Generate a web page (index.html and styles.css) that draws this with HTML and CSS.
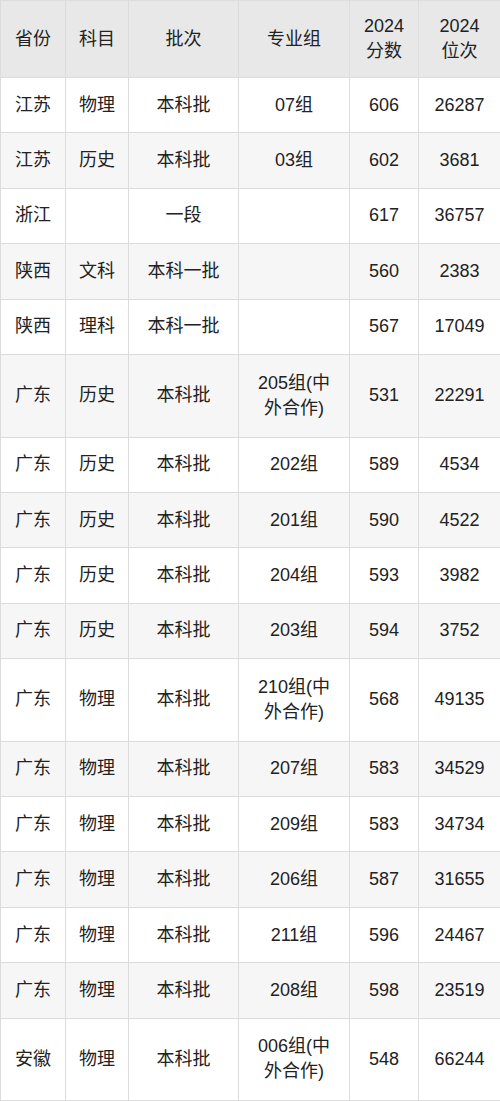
FILE: index.html
```html
<!DOCTYPE html>
<html lang="zh">
<head>
<meta charset="utf-8">
<link rel="stylesheet" href="styles.css">
</head>
<body>
<table class="tbl">
<colgroup>
<col class="c1"><col class="c2"><col class="c3"><col class="c4"><col class="c5"><col class="c6">
</colgroup>
<thead>
<tr class="head"><th>省份</th><th>科目</th><th>批次</th><th>专业组</th><th>2024<br>分数</th><th>2024<br>位次</th></tr>
</thead>
<tbody>
<tr><td>江苏</td><td>物理</td><td>本科批</td><td>07组</td><td>606</td><td>26287</td></tr>
<tr><td>江苏</td><td>历史</td><td>本科批</td><td>03组</td><td>602</td><td>3681</td></tr>
<tr><td>浙江</td><td></td><td>一段</td><td></td><td>617</td><td>36757</td></tr>
<tr><td>陕西</td><td>文科</td><td>本科一批</td><td></td><td>560</td><td>2383</td></tr>
<tr><td>陕西</td><td>理科</td><td>本科一批</td><td></td><td>567</td><td>17049</td></tr>
<tr class="tall"><td>广东</td><td>历史</td><td>本科批</td><td>205组(中外合作)</td><td>531</td><td>22291</td></tr>
<tr><td>广东</td><td>历史</td><td>本科批</td><td>202组</td><td>589</td><td>4534</td></tr>
<tr><td>广东</td><td>历史</td><td>本科批</td><td>201组</td><td>590</td><td>4522</td></tr>
<tr><td>广东</td><td>历史</td><td>本科批</td><td>204组</td><td>593</td><td>3982</td></tr>
<tr><td>广东</td><td>历史</td><td>本科批</td><td>203组</td><td>594</td><td>3752</td></tr>
<tr class="tall"><td>广东</td><td>物理</td><td>本科批</td><td>210组(中外合作)</td><td>568</td><td>49135</td></tr>
<tr><td>广东</td><td>物理</td><td>本科批</td><td>207组</td><td>583</td><td>34529</td></tr>
<tr><td>广东</td><td>物理</td><td>本科批</td><td>209组</td><td>583</td><td>34734</td></tr>
<tr><td>广东</td><td>物理</td><td>本科批</td><td>206组</td><td>587</td><td>31655</td></tr>
<tr><td>广东</td><td>物理</td><td>本科批</td><td>211组</td><td>596</td><td>24467</td></tr>
<tr><td>广东</td><td>物理</td><td>本科批</td><td>208组</td><td>598</td><td>23519</td></tr>
<tr class="tall"><td>安徽</td><td>物理</td><td>本科批</td><td>006组(中外合作)</td><td>548</td><td>66244</td></tr>
</tbody>
</table>
</body>
</html>
```

FILE: styles.css
```css
html, body {
  margin: 0;
  padding: 0;
  background: #ffffff;
}
.tbl {
  width: 500px;
  border-collapse: collapse;
  table-layout: fixed;
  font-family: "Liberation Sans", "Noto Sans CJK SC", sans-serif;
  font-size: 18px;
  line-height: 25px;
  color: #222222;
}
.c1 { width: 65px; }
.c2 { width: 63px; }
.c3 { width: 110px; }
.c4 { width: 111px; }
.c5 { width: 69px; }
.c6 { width: 82px; }
.tbl th, .tbl td {
  border: 1px solid #dcdcdc;
  text-align: center;
  vertical-align: middle;
  padding: 0 12px;
  font-weight: normal;
}
.head th {
  background: #e8e8e8;
  height: 76px;
}
.tbl tbody tr td {
  height: 54.4px;
}
.tbl tbody tr:nth-child(even) td {
  background: #f6f6f6;
}
.tbl tbody tr.tall td {
  height: 81.6px;
}
```
